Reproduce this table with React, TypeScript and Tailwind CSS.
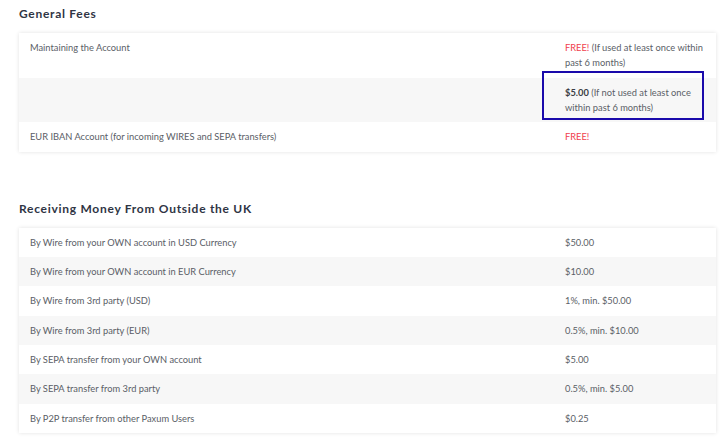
const general = [
  { label: "Maintaining the Account", kind: "free" as const },
  { label: "", kind: "paid" as const },
  { label: "EUR IBAN Account (for incoming WIRES and SEPA transfers)", kind: "freeOnly" as const },
];

const receiving = [
  ["By Wire from your OWN account in USD Currency", "$50.00"],
  ["By Wire from your OWN account in EUR Currency", "$10.00"],
  ["By Wire from 3rd party (USD)", "1%, min. $50.00"],
  ["By Wire from 3rd party (EUR)", "0.5%, min. $10.00"],
  ["By SEPA transfer from your OWN account", "$5.00"],
  ["By SEPA transfer from 3rd party", "0.5%, min. $5.00"],
  ["By P2P transfer from other Paxum Users", "$0.25"],
];

function SectionTitle({ children }: { children: React.ReactNode }) {
  return (
    <h2 className="text-[12px] leading-[18px] font-bold tracking-[0.06em] text-[#2f3544]">
      {children}
    </h2>
  );
}

function Row({ stripe, left, right }: { stripe: boolean; left: React.ReactNode; right: React.ReactNode }) {
  return (
    <div className={`flex py-[7px] text-[9.3px] leading-[15.35px] text-[#5a5e66] ${stripe ? "bg-[#f7f7f7]" : "bg-white"}`}>
      <div className="flex-1 pl-[11px]">{left}</div>
      <div className="w-[151px] whitespace-nowrap pr-[8px]">{right}</div>
    </div>
  );
}

export default function App() {
  return (
    <div className="min-h-[442px] w-[725px] bg-white pl-[19px] pr-[9px] pt-[5px] font-['Lato','Open_Sans',sans-serif]">
      <SectionTitle>General Fees</SectionTitle>
      <div className="relative mt-[10px] bg-white shadow-[0_0_4px_rgba(0,0,0,0.12)]">
        {general.map((r, i) => (
          <Row
            key={i}
            stripe={i % 2 === 1}
            left={r.label}
            right={
              r.kind === "free" ? (
                <>
                  <span className="text-[#f0414e]">FREE!</span> (If used at least once within
                  <br />
                  past 6 months)
                </>
              ) : r.kind === "paid" ? (
                <>
                  <span className="font-bold text-[#3a3d44]">$5.00</span> (If not used at least once
                  <br />
                  within past 6 months)
                </>
              ) : (
                <span className="text-[#f0414e]">FREE!</span>
              )
            }
          />
        ))}
        <div className="pointer-events-none absolute left-[523px] top-[38px] h-[49px] w-[162px] border-2 border-[#1a0aab]" />
      </div>

      <div className="mt-[48px]">
        <SectionTitle>Receiving Money From Outside the UK</SectionTitle>
      </div>
      <div className="mt-[10px] bg-white shadow-[0_0_4px_rgba(0,0,0,0.12)]">
        {receiving.map(([l, r], i) => (
          <Row key={l} stripe={i % 2 === 1} left={l} right={r} />
        ))}
      </div>
    </div>
  );
}
